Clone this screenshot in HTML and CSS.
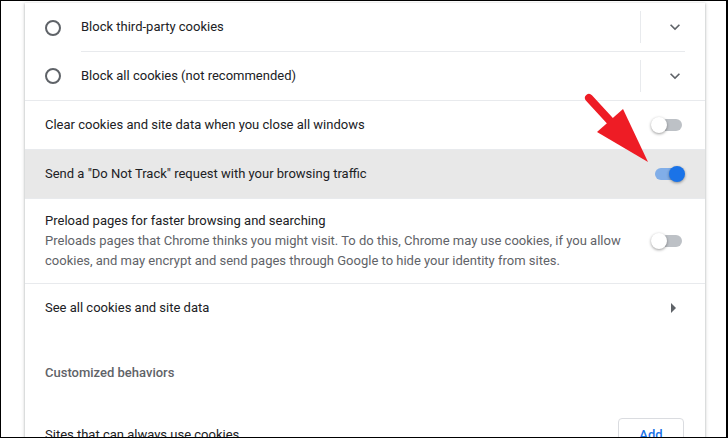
FILE: index.html
```html
<!DOCTYPE html>
<html>
<head>
<meta charset="utf-8">
<link rel="stylesheet" href="styles.css">
</head>
<body>
<div class="frame">
  <div class="card">
    <div class="radio-row">
      <span class="radio"></span>
      <div class="radio-body sep">
        <span class="label">Block third-party cookies</span>
        <span class="vsep"></span>
        <span class="expand"><svg width="20" height="20" viewBox="0 0 24 24"><path d="M16.59 8.59L12 13.17 7.41 8.59 6 10l6 6 6-6z" fill="#5f6368"/></svg></span>
      </div>
    </div>
    <div class="radio-row last">
      <span class="radio"></span>
      <div class="radio-body">
        <span class="label">Block all cookies (not recommended)</span>
        <span class="vsep"></span>
        <span class="expand"><svg width="20" height="20" viewBox="0 0 24 24"><path d="M16.59 8.59L12 13.17 7.41 8.59 6 10l6 6 6-6z" fill="#5f6368"/></svg></span>
      </div>
    </div>
    <div class="row">
      <span class="label">Clear cookies and site data when you close all windows</span>
      <span class="toggle"><span class="track"></span><span class="knob"></span></span>
    </div>
    <div class="row hover">
      <span class="label">Send a "Do Not Track" request with your browsing traffic</span>
      <span class="toggle on"><span class="track"></span><span class="knob"></span></span>
    </div>
    <div class="row multi">
      <div class="text">
        <div class="title">Preload pages for faster browsing and searching</div>
        <div class="desc">Preloads pages that Chrome thinks you might visit. To do this, Chrome may use cookies, if you allow cookies, and may encrypt and send pages through Google to hide your identity from sites.</div>
      </div>
      <span class="toggle"><span class="track"></span><span class="knob"></span></span>
    </div>
    <div class="row noborder">
      <span class="label">See all cookies and site data</span>
      <svg class="arrow" width="24" height="24" viewBox="0 0 24 24"><path d="M10 17l5-5-5-5v10z" fill="#5f6368"/></svg>
    </div>
    <div class="heading">Customized behaviors</div>
    <div class="row noborder sites">
      <span class="label">Sites that can always use cookies</span>
      <button class="add">Add</button>
    </div>
  </div>
  <svg class="annot" width="728" height="438" viewBox="0 0 728 438">
    <line x1="589" y1="98" x2="612" y2="123" stroke="#ee1c25" stroke-width="8" stroke-linecap="round"/>
    <polygon points="597,132 623,109 648,162" fill="#ee1c25"/>
  </svg>
</div>
</body>
</html>
```

FILE: styles.css
```css
html, body {
  margin: 0;
  padding: 0;
  background: #fff;
}

.frame {
  position: relative;
  width: 728px;
  height: 438px;
  box-sizing: border-box;
  border-style: solid;
  border-color: #000;
  border-width: 1px 2px 1px 1px;
  overflow: hidden;
  background: #fff;
  font-family: Roboto, "Liberation Sans", sans-serif;
  font-size: 13px;
  line-height: 20px;
  color: #202124;
}

.card {
  margin: 2px 21px 0 24px;
  background: #fff;
  box-shadow: 0 1px 2px 0 rgba(60, 64, 67, 0.3), 0 1px 3px 1px rgba(60, 64, 67, 0.15);
  min-height: 480px;
}

.radio-row {
  display: flex;
  align-items: center;
  padding: 0 20px;
}

.radio-row.last {
  border-bottom: 1px solid #e8eaed;
}

.radio {
  width: 16px;
  height: 16px;
  box-sizing: border-box;
  border: 2px solid #5f6368;
  border-radius: 50%;
  flex-shrink: 0;
}

.radio-body {
  flex: 1;
  display: flex;
  align-items: center;
  height: 48px;
  margin-left: 20px;
}

.radio-body.sep {
  border-bottom: 1px solid #e8eaed;
}

.label {
  flex: 1;
}

.vsep {
  width: 1px;
  height: 32px;
  background: #e8eaed;
}

.expand {
  width: 44px;
  display: flex;
  justify-content: flex-end;
  align-items: center;
}

.expand svg {
  display: block;
}

.row {
  display: flex;
  align-items: center;
  min-height: 48px;
  padding: 0 20px;
  border-bottom: 1px solid #e8eaed;
}

.row.noborder {
  border-bottom: none;
}

.row.hover {
  background: #e8e8e8;
}

.row.multi {
  padding-top: 12px;
  padding-bottom: 12px;
}

.text {
  flex: 1;
  padding-right: 20px;
}

.desc {
  color: #5f6368;
}

.toggle {
  position: relative;
  width: 34px;
  height: 16px;
  flex-shrink: 0;
}

.track {
  position: absolute;
  left: 4px;
  top: 2px;
  width: 27px;
  height: 12px;
  border-radius: 6px;
  background: #bdc1c6;
}

.knob {
  position: absolute;
  left: 0;
  top: 0;
  width: 16px;
  height: 16px;
  border-radius: 50%;
  background: #fff;
  box-shadow: 0 1px 3px 0 rgba(0, 0, 0, 0.4);
}

.toggle.on .track {
  background: rgba(26, 115, 232, 0.5);
}

.toggle.on .knob {
  left: 18px;
  background: #1a73e8;
}

.arrow {
  display: block;
}

.heading {
  padding: 31px 20px 0;
  line-height: 20px;
  font-weight: 500;
  color: #5f6368;
}

.sites {
  margin-top: 28px;
}

.add {
  width: 66px;
  height: 32px;
  margin-right: 1px;
  margin-bottom: 2px;
  background: #fff;
  border: 1px solid #dadce0;
  border-radius: 4px;
  color: #1a73e8;
  font-family: Roboto, "Liberation Sans", sans-serif;
  font-size: 13px;
  font-weight: 500;
  padding: 0;
}

.annot {
  position: absolute;
  left: -1px;
  top: -1px;
  pointer-events: none;
}
```
